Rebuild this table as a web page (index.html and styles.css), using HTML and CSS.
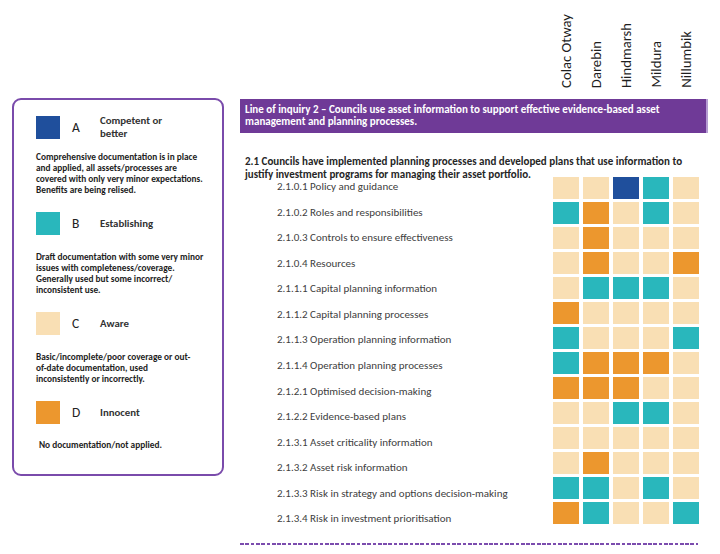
FILE: index.html
```html
<!DOCTYPE html>
<html lang="en">
<head>
<meta charset="utf-8">
<title>Line of inquiry 2</title>
<link rel="stylesheet" href="styles.css">
</head>
<body>
<div class="page">
  <aside class="legend">
    <div class="item item-a">
      <div class="key"><span class="sw sw-a"></span><span class="letter">A</span><span class="name">Competent or<br>better</span></div>
      <p class="desc desc-a">Comprehensive documentation is in place<br>and applied, all assets/processes are<br>covered with only very minor expectations.<br>Benefits are being relised.</p>
    </div>
    <div class="item item-b">
      <div class="key"><span class="sw sw-b"></span><span class="letter">B</span><span class="name">Establishing</span></div>
      <p class="desc">Draft documentation with some very minor<br>issues with completeness/coverage.<br>Generally used but some incorrect/<br>inconsistent use.</p>
    </div>
    <div class="item item-c">
      <div class="key"><span class="sw sw-c"></span><span class="letter">C</span><span class="name">Aware</span></div>
      <p class="desc">Basic/incomplete/poor coverage or out-<br>of-date documentation, used<br>inconsistently or incorrectly.</p>
    </div>
    <div class="item item-d">
      <div class="key"><span class="sw sw-d"></span><span class="letter">D</span><span class="name">Innocent</span></div>
      <p class="desc desc-d">No documentation/not applied.</p>
    </div>
  </aside>

  <main class="matrix">
    <div class="heads">
      <span class="head">Colac Otway</span>
      <span class="head">Darebin</span>
      <span class="head">Hindmarsh</span>
      <span class="head">Mildura</span>
      <span class="head">Nillumbik</span>
    </div>
    <div class="loi">Line of inquiry 2 – Councils use asset information to support effective evidence-based asset management and planning processes.</div>
    <h2 class="sub">2.1 Councils have implemented planning processes and developed plans that use information to justify investment programs for managing their asset portfolio.</h2>
    <div class="rows">
      <ul class="labels">
        <li>2.1.0.1 Policy and guidance</li>
        <li>2.1.0.2 Roles and responsibilities</li>
        <li>2.1.0.3 Controls to ensure effectiveness</li>
        <li>2.1.0.4 Resources</li>
        <li>2.1.1.1 Capital planning information</li>
        <li>2.1.1.2 Capital planning processes</li>
        <li>2.1.1.3 Operation planning information</li>
        <li>2.1.1.4 Operation planning processes</li>
        <li>2.1.2.1 Optimised decision-making</li>
        <li>2.1.2.2 Evidence-based plans</li>
        <li>2.1.3.1 Asset criticality information</li>
        <li>2.1.3.2 Asset risk information</li>
        <li>2.1.3.3 Risk in strategy and options decision-making</li>
        <li>2.1.3.4 Risk in investment prioritisation</li>
      </ul>
      <div class="cells">
        <span class="c c-c"></span><span class="c c-c"></span><span class="c c-a"></span><span class="c c-b"></span><span class="c c-c"></span>
        <span class="c c-b"></span><span class="c c-d"></span><span class="c c-c"></span><span class="c c-b"></span><span class="c c-c"></span>
        <span class="c c-c"></span><span class="c c-d"></span><span class="c c-c"></span><span class="c c-c"></span><span class="c c-c"></span>
        <span class="c c-c"></span><span class="c c-d"></span><span class="c c-c"></span><span class="c c-c"></span><span class="c c-d"></span>
        <span class="c c-c"></span><span class="c c-b"></span><span class="c c-b"></span><span class="c c-b"></span><span class="c c-c"></span>
        <span class="c c-d"></span><span class="c c-c"></span><span class="c c-c"></span><span class="c c-c"></span><span class="c c-c"></span>
        <span class="c c-b"></span><span class="c c-c"></span><span class="c c-c"></span><span class="c c-c"></span><span class="c c-b"></span>
        <span class="c c-b"></span><span class="c c-d"></span><span class="c c-d"></span><span class="c c-d"></span><span class="c c-c"></span>
        <span class="c c-d"></span><span class="c c-d"></span><span class="c c-d"></span><span class="c c-c"></span><span class="c c-c"></span>
        <span class="c c-c"></span><span class="c c-c"></span><span class="c c-b"></span><span class="c c-b"></span><span class="c c-c"></span>
        <span class="c c-c"></span><span class="c c-c"></span><span class="c c-c"></span><span class="c c-c"></span><span class="c c-c"></span>
        <span class="c c-c"></span><span class="c c-d"></span><span class="c c-c"></span><span class="c c-c"></span><span class="c c-c"></span>
        <span class="c c-b"></span><span class="c c-b"></span><span class="c c-c"></span><span class="c c-b"></span><span class="c c-c"></span>
        <span class="c c-d"></span><span class="c c-b"></span><span class="c c-c"></span><span class="c c-c"></span><span class="c c-b"></span>
      </div>
    </div>
    <div class="dash"></div>
  </main>
</div>
</body>
</html>
```

FILE: styles.css
```css
* { box-sizing: border-box; }
html, body { margin: 0; padding: 0; background: #fff; }
body {
  font-family: Carlito, Calibri, Lato, "Noto Sans", sans-serif;
  color: #404040;
  width: 720px;
  height: 554px;
  overflow: hidden;
}
.page {
  display: flex;
  align-items: flex-start;
  padding-left: 12px;
  gap: 16px;
}

/* legend */
.legend {
  margin-top: 98px;
  width: 212px;
  height: 378px;
  border: 2px solid #7a4bab;
  border-radius: 9px;
  padding: 14px 0 0 22px;
}
.item { margin-top: 17px; }
.item-a { margin-top: 0; }
.key {
  display: flex;
  align-items: center;
}
.sw {
  width: 24px;
  height: 23px;
  flex: none;
}
.sw-a { background: #1f4f9c; }
.sw-b { background: #29b7bc; }
.sw-c { background: #f9dfb4; }
.sw-d { background: #ec972e; }
.letter {
  width: 40px;
  padding-left: 12px;
  font-size: 13.5px;
  color: #222;
}
.name {
  font-size: 10.8px;
  line-height: 13px;
  color: #333;
  font-weight: 600;
}
.desc {
  margin: 16px 0 0;
  font-size: 9.3px;
  line-height: 11px;
  color: #1e1e1e;
  font-weight: 600;
  white-space: nowrap;
}
.desc-a { margin-top: 11px; }
.desc-d { margin-top: 15px; padding-left: 3px; }

/* matrix */
.matrix {
  width: 468px;
}
.heads {
  height: 99px;
  display: grid;
  grid-template-columns: repeat(5, 26px);
  column-gap: 4px;
  padding-left: 313px;
  padding-bottom: 11px;
  align-items: end;
}
.head {
  writing-mode: vertical-rl;
  transform: rotate(180deg);
  justify-self: center;
  font-size: 14.7px;
  line-height: 15px;
  color: #1e1e1e;
  white-space: nowrap;
}
.loi {
  width: 468px;
  height: 34px;
  background: #6f3a97;
  border-right: 2px solid #b59cd2;
  color: #fff;
  font-weight: 700;
  font-size: 11px;
  line-height: 12px;
  padding: 5px 4px 0 5px;
}
.sub {
  margin: 23px 0 -4px;
  padding-left: 5px;
  font-size: 11px;
  line-height: 12.5px;
  font-weight: 700;
  color: #262626;
}
.rows {
  display: flex;
  align-items: flex-start;
}
.labels {
  list-style: none;
  margin: -2.8px 0 0;
  padding: 0 0 0 37px;
  width: 313px;
}
.labels li {
  height: 25.55px;
  font-size: 11px;
  line-height: 25.55px;
  color: #404040;
  white-space: nowrap;
}
.cells {
  display: grid;
  grid-template-columns: repeat(5, 26px);
  grid-auto-rows: 22px;
  column-gap: 4px;
  row-gap: 3px;
}
.c-a { background: #1f4f9c; }
.c-b { background: #29b7bc; }
.c-c { background: #f9dfb4; }
.c-d { background: #ec972e; }
.dash {
  margin-top: 11px;
  width: 458px;
  height: 2px;
  background: repeating-linear-gradient(90deg, #7b4cae 0 3.7px, transparent 3.7px 5.3px);
}
```
